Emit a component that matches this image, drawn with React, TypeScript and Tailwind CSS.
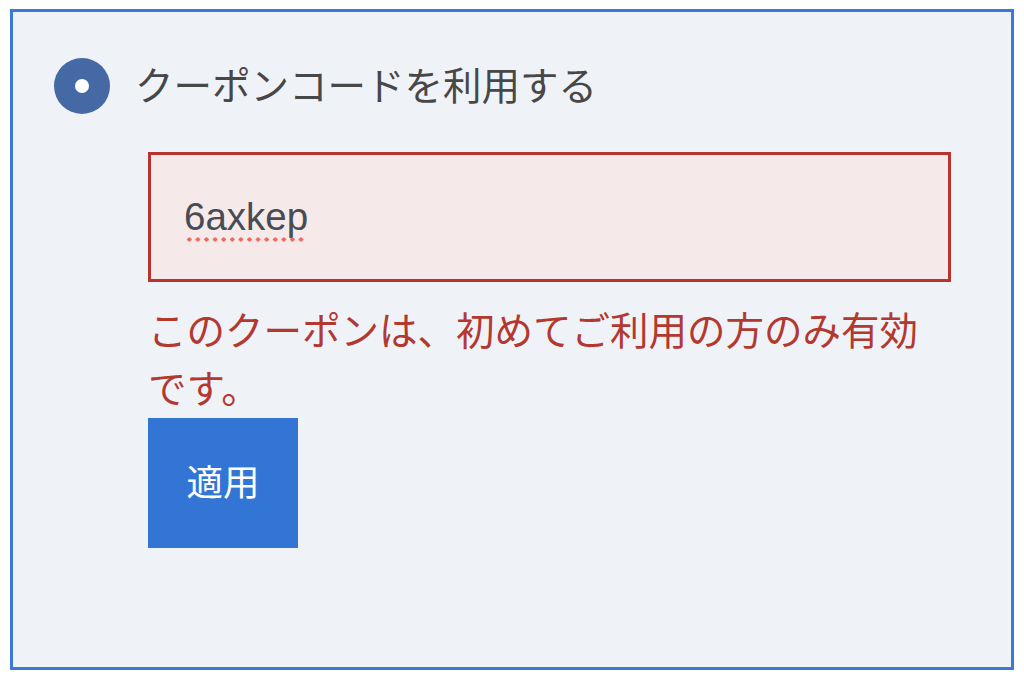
export default function App() {
  return (
    <div className="min-h-screen bg-white pt-[9px] pl-[10px]" style={{ fontFamily: '"Noto Sans CJK JP", "Noto Sans", sans-serif' }}>
      <div className="w-[1004px] h-[661px] border-[3px] border-[#3a7ad6] bg-[#eff2f7] pl-[41px] pt-[46px]">
        {/* radio row */}
        <div className="flex items-center gap-[25px]">
          <div className="w-[56px] h-[56px] rounded-full bg-[#4469a5] flex items-center justify-center">
            <div className="w-[14px] h-[14px] rounded-full bg-white" />
          </div>
          <span className="text-[38.5px] leading-none text-[#474747] pb-[6px]">クーポンコードを利用する</span>
        </div>

        <div className="pl-[94px] mt-[38px] w-[897px]">
          <div className="h-[130px] border-[3px] border-[#b8352f] bg-[#f5e9e9] flex items-center pl-[33px]">
            <div className="inline-flex flex-col pt-[6px]">
              <span
                className="text-[38.5px] leading-none text-[#474c54]"
                style={{ fontFamily: '"Liberation Sans", Arial, sans-serif' }}
              >
                6axkep
              </span>
              {/* spellcheck squiggle */}
              <div className="mt-[1px] ml-[1px] h-[5px] w-[122px] bg-[radial-gradient(circle,#ee6a5e_1.9px,transparent_2.3px)] bg-[length:8.6px_5px]" />
            </div>
          </div>
          <p className="mt-[17px] text-[38.5px] leading-[58px] text-[#b3382f]">
            このクーポンは、初めてご利用の方のみ有効です。
          </p>
          <button className="mt-[3px] w-[150px] h-[130px] bg-[#3375d4] text-white text-[36.5px] leading-none flex items-center justify-center pb-[4px]">
            適用
          </button>
        </div>
      </div>
    </div>
  )
}
